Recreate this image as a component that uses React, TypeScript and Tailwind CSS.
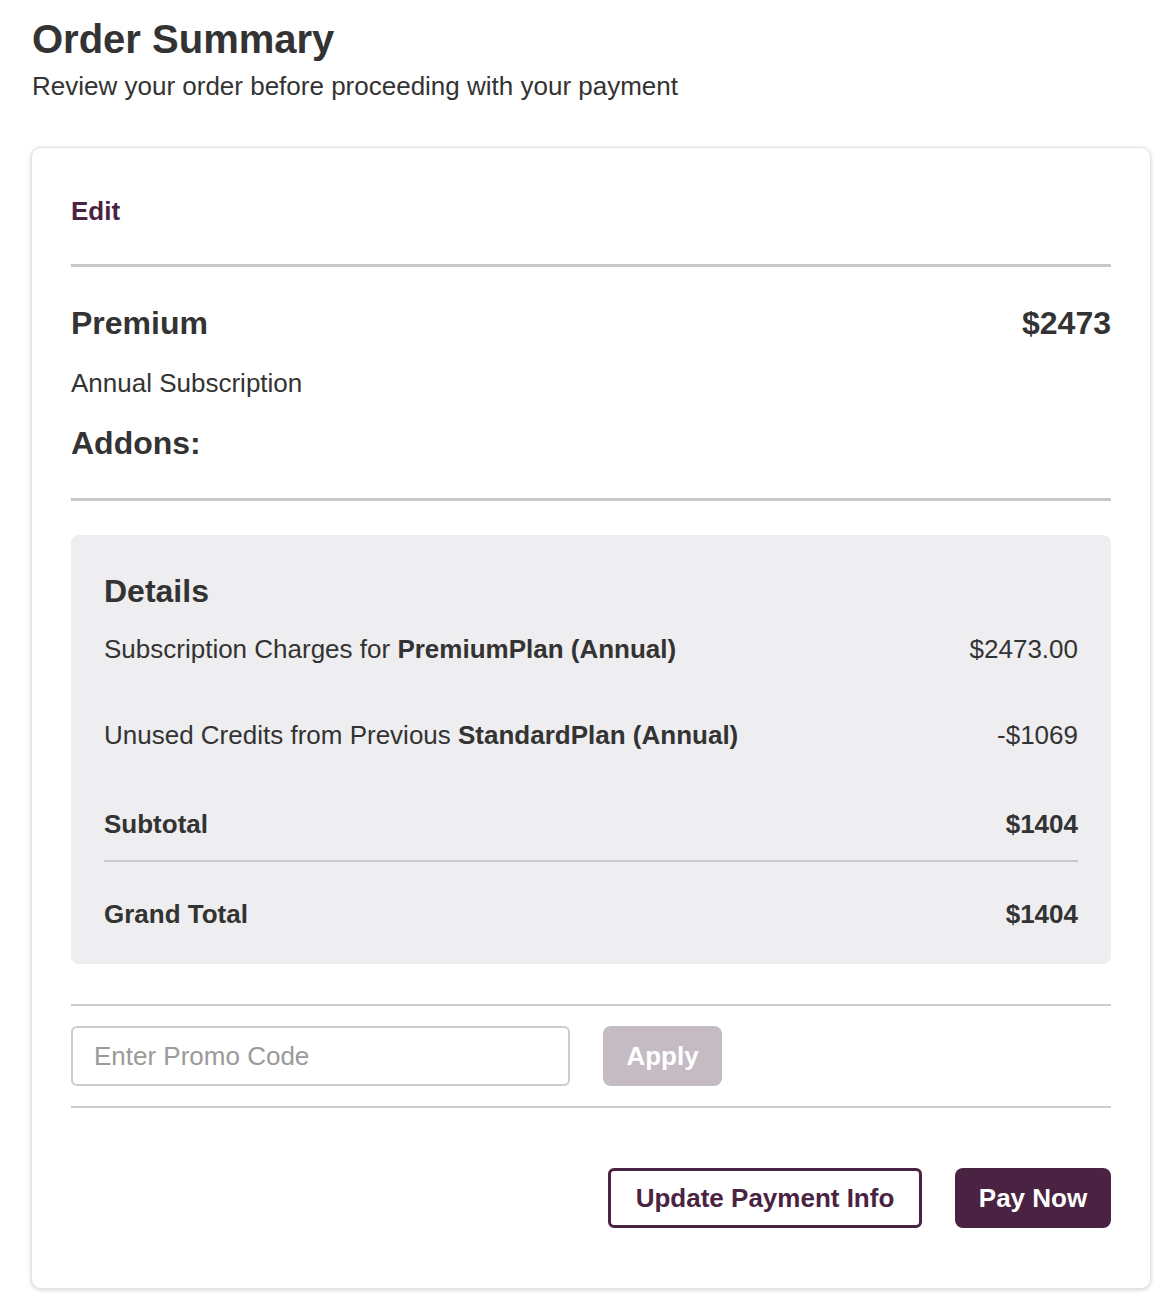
const PURPLE = "#4a2342";

function DetailRow({ label, value, bold }: { label: React.ReactNode; value: string; bold?: boolean }) {
  return (
    <div className={`flex items-center justify-between text-[26px] leading-[32px] ${bold ? "font-bold" : ""}`}>
      <span>{label}</span>
      <span>{value}</span>
    </div>
  );
}

export default function App() {
  return (
    <div className="min-h-[1296px] bg-white text-[#333] pb-[9px]" style={{ fontFamily: '"Liberation Sans", Arial, sans-serif' }}>
      <div className="pl-[32px] pt-[15px]">
        <h1 className="text-[40px] leading-[48px] font-bold">Order Summary</h1>
        <p className="mt-[7px] text-[26px] leading-[32px]">Review your order before proceeding with your payment</p>
      </div>

      <div className="ml-[31px] mt-[45px] w-[1120px] rounded-[10px] border border-[#e4e4e4] bg-white px-[39px] pt-[47px] pb-[60px] shadow-[0_1px_4px_rgba(0,0,0,0.18)]">
        <button className="block text-[26px] leading-[32px] font-bold text-[#4a2342]">Edit</button>
        <div className="mt-[37px] h-[3px] bg-[#c8c8c8]" />

        <div className="mt-[36px] flex items-center justify-between text-[32px] leading-[40px] font-bold">
          <span>Premium</span>
          <span>$2473</span>
        </div>
        <p className="mt-[24px] text-[26px] leading-[32px]">Annual Subscription</p>
        <h2 className="mt-[24px] text-[32px] leading-[40px] font-bold">Addons:</h2>
        <div className="mt-[35px] h-[3px] bg-[#c8c8c8]" />

        <div className="mt-[34px] rounded-[8px] bg-[#eeedf0] px-[33px] pt-[36px] pb-[34px]">
          <h3 className="text-[32px] leading-[40px] font-bold">Details</h3>
          <div className="mt-[22px]">
            <DetailRow
              label={<>Subscription Charges for <b>PremiumPlan (Annual)</b></>}
              value="$2473.00"
            />
          </div>
          <div className="mt-[54px]">
            <DetailRow
              label={<>Unused Credits from Previous <b>StandardPlan (Annual)</b></>}
              value="-$1069"
            />
          </div>
          <div className="mt-[57px]">
            <DetailRow label="Subtotal" value="$1404" bold />
          </div>
          <div className="mt-[20px] h-[2px] bg-[#c9c7cc]" />
          <div className="mt-[36px]">
            <DetailRow label="Grand Total" value="$1404" bold />
          </div>
        </div>

        <div className="mt-[40px] h-[2px] bg-[#cccccc]" />
        <div className="mt-[20px] flex items-center gap-[33px]">
          <input
            placeholder="Enter Promo Code"
            className="h-[60px] w-[499px] rounded-[6px] border-2 border-[#cccccc] px-[21px] text-[26px] text-[#333] placeholder:text-[#9a9a9a] outline-none"
          />
          <button className="h-[60px] w-[119px] rounded-[8px] bg-[#c5bcc3] text-[26px] font-bold text-white">Apply</button>
        </div>
        <div className="mt-[20px] h-[2px] bg-[#cccccc]" />

        <div className="mt-[60px] flex justify-end gap-[33px]">
          <button className="h-[60px] w-[314px] rounded-[6px] border-[3px] border-[#4a2342] text-[26px] font-bold text-[#4a2342]">
            Update Payment Info
          </button>
          <button className="h-[60px] w-[156px] rounded-[8px] text-[26px] font-bold text-white" style={{ backgroundColor: PURPLE }}>
            Pay Now
          </button>
        </div>
      </div>
    </div>
  );
}
